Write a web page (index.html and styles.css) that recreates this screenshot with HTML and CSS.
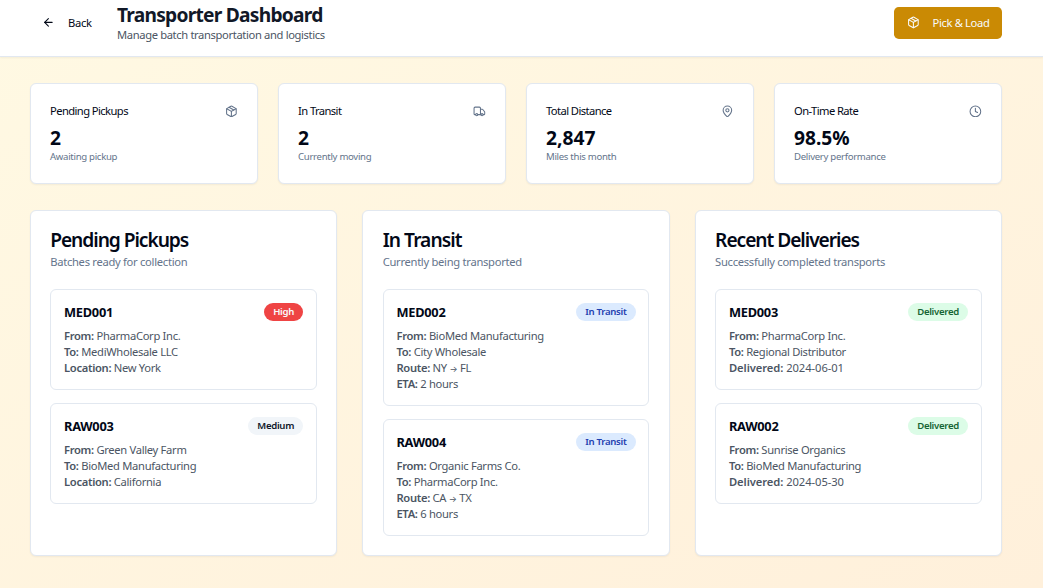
FILE: index.html
```html
<!DOCTYPE html>
<html lang="en">
<head>
<meta charset="utf-8">
<title>Transporter Dashboard</title>
<link rel="stylesheet" href="styles.css">
</head>
<body>
<svg class="sprite" aria-hidden="true">
  <symbol id="package" viewBox="0 0 24 24"><path d="M11 21.73a2 2 0 0 0 2 0l7-4A2 2 0 0 0 21 16V8a2 2 0 0 0-1-1.73l-7-4a2 2 0 0 0-2 0l-7 4A2 2 0 0 0 3 8v8a2 2 0 0 0 1 1.73z"/><path d="M12 22V12"/><path d="m3.3 7 8.7 5 8.7-5"/><path d="m7.5 4.27 9 5.15"/></symbol>
  <symbol id="truck" viewBox="0 0 24 24"><path d="M14 18V6a2 2 0 0 0-2-2H4a2 2 0 0 0-2 2v11a1 1 0 0 0 1 1h2"/><path d="M15 18H9"/><path d="M19 18h2a1 1 0 0 0 1-1v-3.65a1 1 0 0 0-.22-.624l-3.48-4.35A1 1 0 0 0 17.52 8H14"/><circle cx="17" cy="18" r="2"/><circle cx="7" cy="18" r="2"/></symbol>
  <symbol id="pin" viewBox="0 0 24 24"><path d="M20 10c0 4.993-5.539 10.193-7.399 11.799a1 1 0 0 1-1.202 0C9.539 20.193 4 14.993 4 10a8 8 0 0 1 16 0"/><circle cx="12" cy="10" r="3"/></symbol>
  <symbol id="clock" viewBox="0 0 24 24"><circle cx="12" cy="12" r="10"/><path d="M12 6v6l4 2"/></symbol>
  <symbol id="arrow" viewBox="0 0 24 24"><path d="m12 19-7-7 7-7"/><path d="M19 12H5"/></symbol>
</svg>
<header class="header">
  <button class="back"><svg class="icon"><use href="#arrow"/></svg><span>Back</span></button>
  <div class="heading">
    <h1 class="title"><span>Transporter Dashboard</span></h1>
    <p class="subtitle"><span>Manage batch transportation and logistics</span></p>
  </div>
  <button class="primary"><svg class="icon"><use href="#package"/></svg><span>Pick &amp; Load</span></button>
</header>
<main class="main">
  <section class="stats">
    <article class="stat">
      <div class="stat-head"><span class="stat-label">Pending Pickups</span><svg class="icon"><use href="#package"/></svg></div>
      <div class="stat-value">2</div><p class="stat-note">Awaiting pickup</p>
    </article>
    <article class="stat">
      <div class="stat-head"><span class="stat-label">In Transit</span><svg class="icon"><use href="#truck"/></svg></div>
      <div class="stat-value">2</div><p class="stat-note">Currently moving</p>
    </article>
    <article class="stat">
      <div class="stat-head"><span class="stat-label">Total Distance</span><svg class="icon"><use href="#pin"/></svg></div>
      <div class="stat-value">2,847</div><p class="stat-note">Miles this month</p>
    </article>
    <article class="stat">
      <div class="stat-head"><span class="stat-label">On-Time Rate</span><svg class="icon"><use href="#clock"/></svg></div>
      <div class="stat-value">98.5%</div><p class="stat-note">Delivery performance</p>
    </article>
  </section>
  <section class="columns">
    <article class="panel">
      <h2 class="panel-title">Pending Pickups</h2>
      <p class="panel-note">Batches ready for collection</p>
      <div class="batches">
        <div class="batch">
          <div class="batch-head"><h3 class="batch-id">MED001</h3><span class="badge high">High</span></div>
          <p class="row"><b>From:</b> PharmaCorp Inc.</p><p class="row"><b>To:</b> MediWholesale LLC</p><p class="row"><b>Location:</b> New York</p>
        </div>
        <div class="batch">
          <div class="batch-head"><h3 class="batch-id">RAW003</h3><span class="badge medium">Medium</span></div>
          <p class="row"><b>From:</b> Green Valley Farm</p><p class="row"><b>To:</b> BioMed Manufacturing</p><p class="row"><b>Location:</b> California</p>
        </div>
      </div>
    </article>
    <article class="panel">
      <h2 class="panel-title short">In Transit</h2>
      <p class="panel-note">Currently being transported</p>
      <div class="batches">
        <div class="batch">
          <div class="batch-head"><h3 class="batch-id">MED002</h3><span class="badge transit">In Transit</span></div>
          <p class="row"><b>From:</b> BioMed Manufacturing</p><p class="row"><b>To:</b> City Wholesale</p><p class="row"><b>Route:</b> NY <span class="to">→</span> FL</p><p class="row"><b>ETA:</b> 2 hours</p>
        </div>
        <div class="batch">
          <div class="batch-head"><h3 class="batch-id">RAW004</h3><span class="badge transit">In Transit</span></div>
          <p class="row"><b>From:</b> Organic Farms Co.</p><p class="row"><b>To:</b> PharmaCorp Inc.</p><p class="row"><b>Route:</b> CA <span class="to">→</span> TX</p><p class="row"><b>ETA:</b> 6 hours</p>
        </div>
      </div>
    </article>
    <article class="panel">
      <h2 class="panel-title">Recent Deliveries</h2>
      <p class="panel-note">Successfully completed transports</p>
      <div class="batches">
        <div class="batch">
          <div class="batch-head"><h3 class="batch-id">MED003</h3><span class="badge delivered">Delivered</span></div>
          <p class="row"><b>From:</b> PharmaCorp Inc.</p><p class="row"><b>To:</b> Regional Distributor</p><p class="row date"><b>Delivered:</b> 2024-06-01</p>
        </div>
        <div class="batch">
          <div class="batch-head"><h3 class="batch-id">RAW002</h3><span class="badge delivered">Delivered</span></div>
          <p class="row"><b>From:</b> Sunrise Organics</p><p class="row"><b>To:</b> BioMed Manufacturing</p><p class="row date"><b>Delivered:</b> 2024-05-30</p>
        </div>
      </div>
    </article>
  </section>
</main>
</body>
</html>
```
FILE: styles.css
```css
* { box-sizing: border-box; margin: 0; }
body {
  min-height: 588px;
  overflow: hidden;
  font-family: "Noto Sans", "Open Sans", sans-serif;
  font-size: 11.2px;
  color: #020817;
  background: linear-gradient(to bottom right, #fff9e3 0%, #fff0db 100%);
}
.sprite { display: none; }
.icon {
  width: 12.8px; height: 12.8px; flex: none;
  fill: none; stroke: currentColor; stroke-width: 2;
  stroke-linecap: round; stroke-linejoin: round;
}
button { border: 0; background: none; font: inherit; display: flex; align-items: center; }
.header {
  display: flex; height: 57px; padding: 0 41px 0 42px;
  background: #fff; border-bottom: 1px solid #e2e8f0;
  box-shadow: 0 1px 2px rgba(0, 0, 0, .05);
}
.back { width: 49.8px; height: 32px; margin-top: 6px; padding: 0; gap: 13.2px; color: #020817; letter-spacing: -.3px; }
.heading { margin-left: 25.2px; padding-top: 2px; flex: 1; }
.title { font-size: 19.2px; line-height: 26px; font-weight: 700; color: #111827; letter-spacing: -.76px; }
.subtitle { font-size: 11.2px; line-height: 14px; color: #4b5563; letter-spacing: -.36px; }
.primary {
  width: 108px; height: 32px; margin-top: 7px; padding: 0 13px 1px; gap: 12.8px;
  border-radius: 4.8px; background: #ca8a04; color: #f8fafc; white-space: nowrap;
  letter-spacing: -.36px;
}
.main { padding: 26px 41px 32px 30px; }
.stats { display: grid; grid-template-columns: repeat(4, 1fr); gap: 20px; }
.stat, .panel {
  background: #fff; border: 1px solid #e2e8f0; border-radius: 6px;
  box-shadow: 0 1px 2px rgba(0, 0, 0, .05);
}
.stat { height: 101px; padding: 19px; }
.stat-head { display: flex; justify-content: space-between; align-items: center; height: 16px; padding-right: .5px; color: #64748b; }
.stat-label { padding-bottom: 2px; color: #020817; letter-spacing: -.58px; }
.stat-value { margin-top: 6px; font-size: 19.2px; line-height: 25px; font-weight: 700; }
.stat-note { font-size: 9.6px; line-height: 13px; color: #64748b; letter-spacing: -.3px; }
.columns { display: grid; grid-template-columns: repeat(3, 1fr); gap: 25.4px; margin-top: 26px; }
.panel { height: 346px; padding: 18px 19.2px 19px; }
.panel-title { font-size: 19.2px; line-height: 21px; font-weight: 600; letter-spacing: -1.05px; }
.panel-title.short { letter-spacing: -.95px; }
.panel-note { margin-top: 4px; line-height: 16px; color: #64748b; letter-spacing: -.29px; }
.batches { display: grid; gap: 13px; margin-top: 19px; }
.batch { padding: 12px 12.8px 13px; border: 1px solid #e2e8f0; border-radius: 6px; }
.batch-head { display: flex; justify-content: space-between; align-items: center; height: 20px; margin-bottom: 6px; }
.batch-id { font-size: 12.8px; font-weight: 700; line-height: 20px; letter-spacing: -.25px; }
.badge { height: 18px; padding: 0 9px; border-radius: 9px; font-size: 9.6px; line-height: 17px; font-weight: 600; letter-spacing: -.3px; }
.high { background: #ef4444; color: #f8fafc; }
.medium { background: #f1f5f9; color: #0f172a; }
.transit { background: #dbeafe; color: #1e40af; }
.delivered { background: #dcfce7; color: #166534; }
.row { height: 16px; line-height: 16px; color: #4b5563; letter-spacing: -.31px; }
.row b { font-weight: 600; }
.date { letter-spacing: -.06px; }
.to { font-family: Inter, sans-serif; font-size: 8.6px; }
```
